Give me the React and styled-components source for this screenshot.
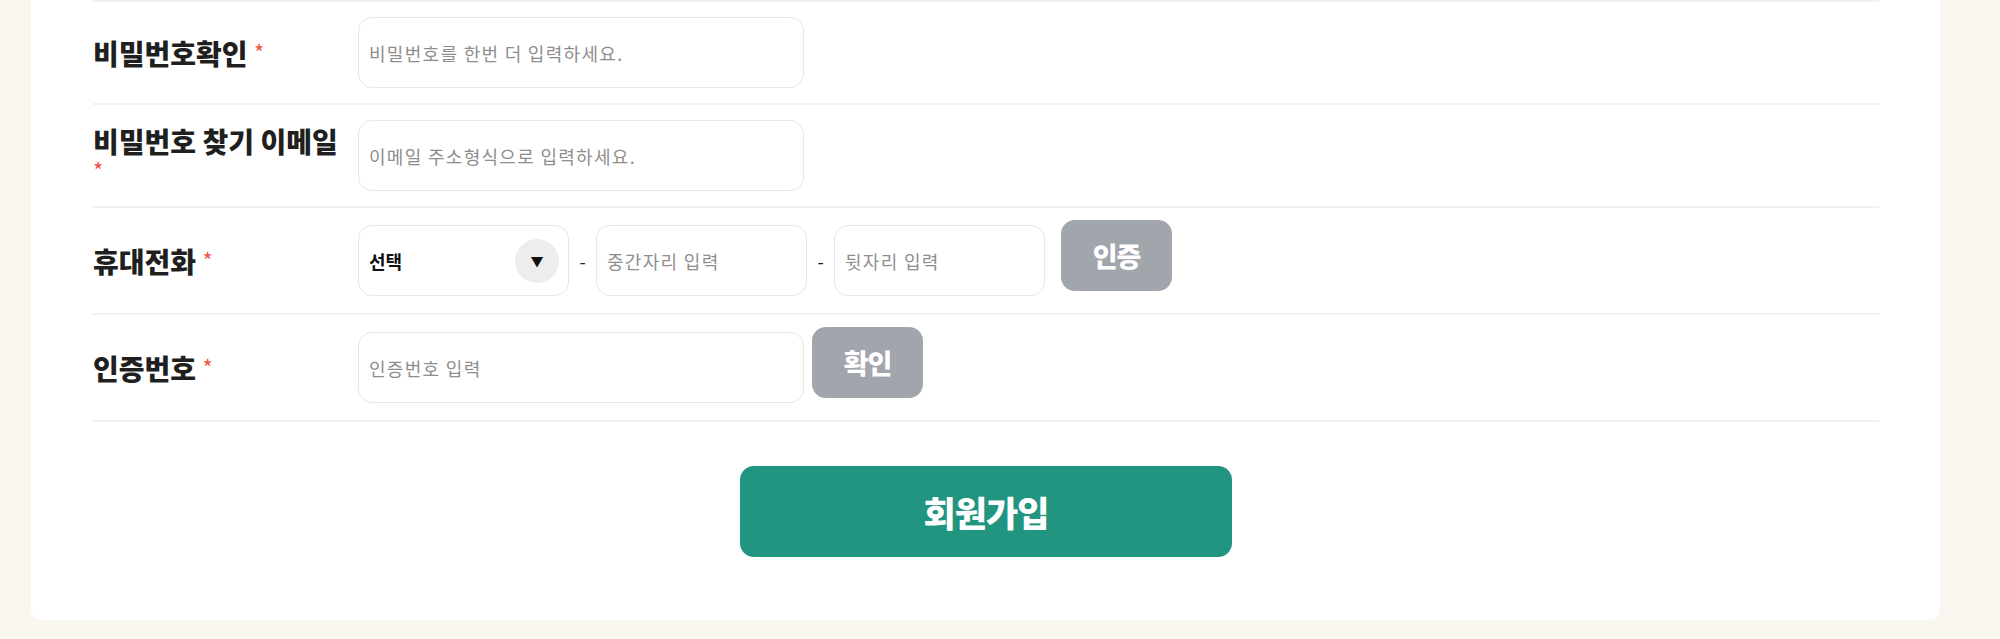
import styled, { createGlobalStyle } from "styled-components";

const GlobalStyle = createGlobalStyle`
    html, body {
        margin: 0;
        padding: 0;
        background: #f9f5ef;
        font-family: "Noto Sans CJK KR", "Noto Sans", sans-serif;
    }
    * {
        box-sizing: border-box;
    }
`;

export default function App() {
    return (
        <>
            <GlobalStyle />
            <Page>
                <Card>
                    <Row h={105} first>
                        <Label>비밀번호확인 <Star>*</Star></Label>
                        <Input w={446} placeholder="비밀번호를 한번 더 입력하세요." />
                    </Row>
                    <Row h={103}>
                        <Label>비밀번호 찾기 이메일 <Star>*</Star></Label>
                        <Input w={446} placeholder="이메일 주소형식으로 입력하세요." />
                    </Row>
                    <Row h={107}>
                        <Label>휴대전화 <Star>*</Star></Label>
                        <Fields>
                            <Select>
                                <span>선택</span>
                                <Arrow>▼</Arrow>
                            </Select>
                            <Dash>-</Dash>
                            <Input w={211} placeholder="중간자리 입력" />
                            <Dash>-</Dash>
                            <Input w={211} placeholder="뒷자리 입력" />
                            <GrayButton gap={16}>인증</GrayButton>
                        </Fields>
                    </Row>
                    <Row h={107}>
                        <Label>인증번호 <Star>*</Star></Label>
                        <Fields>
                            <Input w={446} placeholder="인증번호 입력" />
                            <GrayButton gap={8}>확인</GrayButton>
                        </Fields>
                    </Row>
                    <Submit>
                        <SubmitButton>회원가입</SubmitButton>
                    </Submit>
                </Card>
            </Page>
        </>
    );
}

const Page = styled.div`
    width: 2000px;
    height: 639px;
    padding: 0 60px 0 31px;
    overflow: hidden;
`;

const Card = styled.div`
    background: #ffffff;
    border-radius: 0 0 10px 10px;
    padding: 0 61px 63px 62px;
`;

const Row = styled.div`
    display: flex;
    align-items: center;
    min-height: ${(p) => p.h}px;
    border-bottom: 2px solid #f1f1f1;
    border-top: ${(p) => (p.first ? "2px solid #f1f1f1" : "none")};
`;

const Label = styled.div`
    flex: 0 0 265px;
    padding-right: 8px;
    font-size: 28px;
    font-weight: 900;
    line-height: 30px;
    color: #1f1f1f;
`;

const Star = styled.span`
    display: inline-block;
    font-size: 22px;
    line-height: 16px;
    font-weight: 400;
    color: #ee5543;
    vertical-align: 4px;
`;

const Fields = styled.div`
    display: flex;
    align-items: center;
`;

const Input = styled.input`
    width: ${(p) => p.w}px;
    height: 71px;
    border: 1px solid #e6e6e6;
    border-radius: 14px;
    padding: 0 10px;
    font-family: "Noto Sans CJK KR", sans-serif;
    font-size: 18px;
    letter-spacing: 1.3px;
    background: #fff;
    outline: none;

    &::placeholder {
        color: #8e8e8e;
    }
`;

const Select = styled.div`
    width: 211px;
    height: 71px;
    border: 1px solid #e6e6e6;
    border-radius: 14px;
    padding: 0 9px 0 10px;
    display: flex;
    align-items: center;
    justify-content: space-between;
    font-size: 18px;
    font-weight: 700;
    color: #111;
`;

const Arrow = styled.span`
    width: 44px;
    height: 44px;
    border-radius: 50%;
    background: #ededed;
    display: flex;
    align-items: center;
    justify-content: center;
    font-size: 13px;
    color: #111;
`;

const Dash = styled.span`
    width: 27px;
    text-align: center;
    font-size: 18px;
    color: #222;
`;

const GrayButton = styled.button`
    margin-left: ${(p) => p.gap}px;
    margin-bottom: 10px;
    width: 111px;
    height: 71px;
    border: none;
    border-radius: 14px;
    background: #a1a5ac;
    color: #fff;
    font-family: "Noto Sans CJK KR", sans-serif;
    font-size: 27px;
    font-weight: 900;
    letter-spacing: -1px;
`;

const Submit = styled.div`
    display: flex;
    justify-content: center;
    padding-top: 44px;
`;

const SubmitButton = styled.button`
    width: 492px;
    height: 91px;
    border: none;
    border-radius: 14px;
    background: #21957f;
    color: #fff;
    font-family: "Noto Sans CJK KR", sans-serif;
    font-size: 35px;
    font-weight: 900;
    letter-spacing: -1px;
`;
